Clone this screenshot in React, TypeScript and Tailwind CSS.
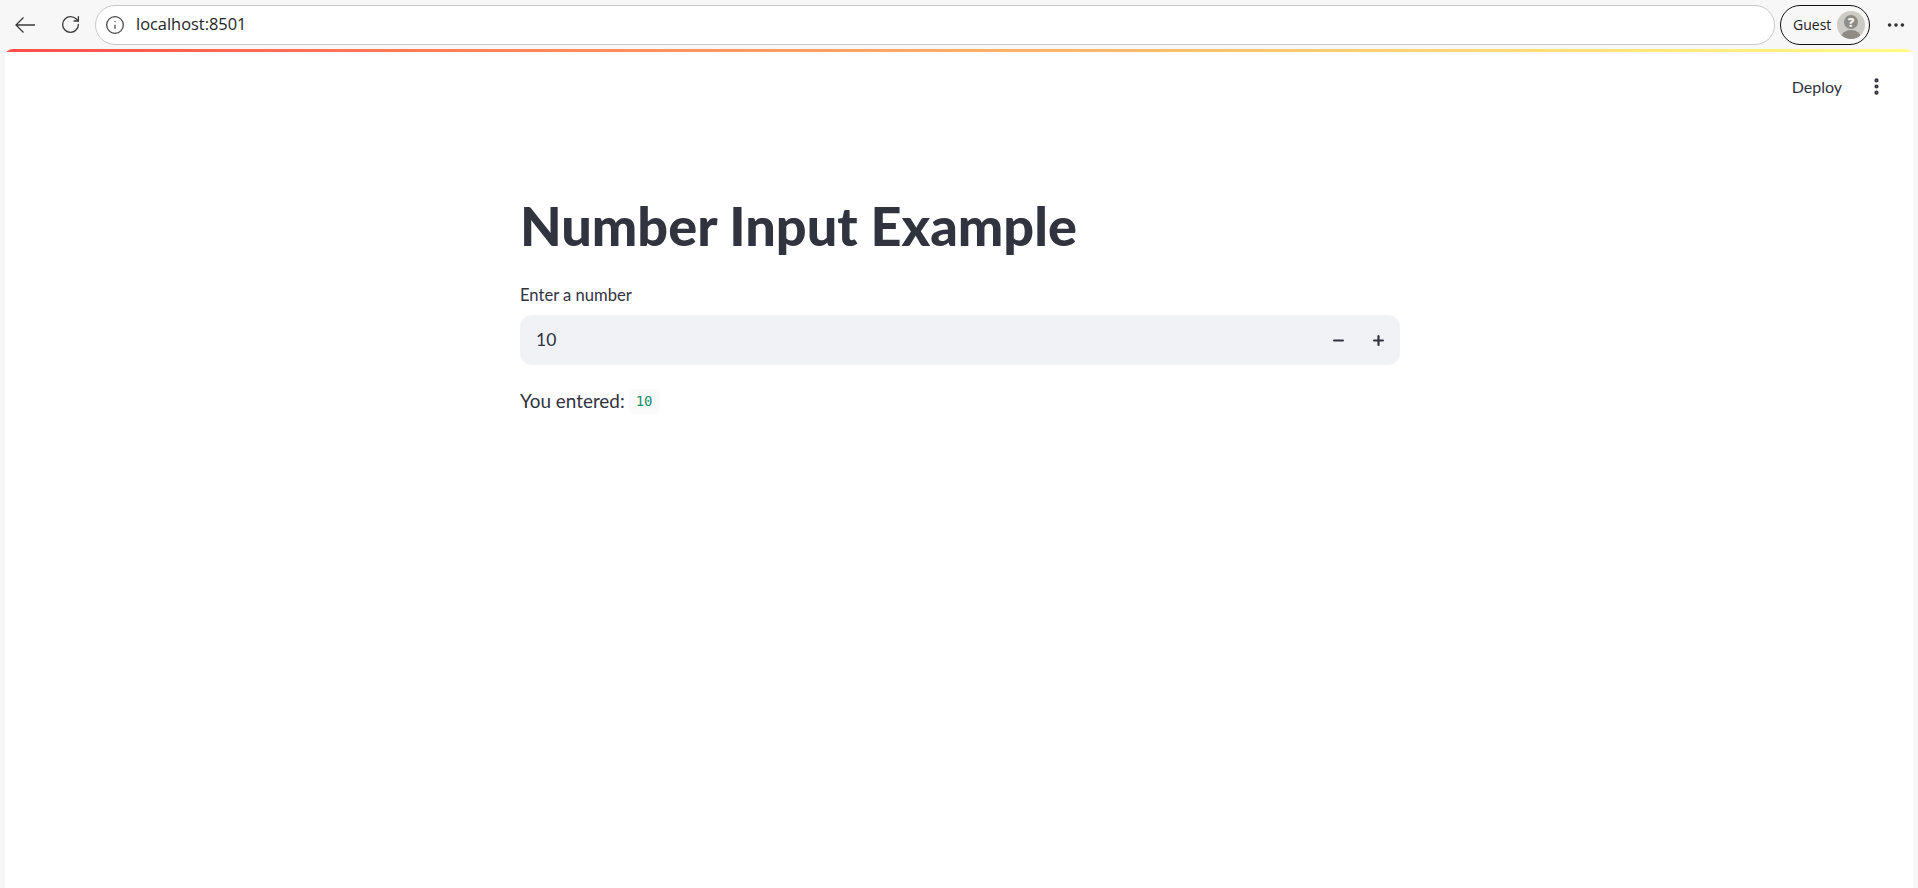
import { RotateCw, Info, Minus, Plus, EllipsisVertical, Ellipsis } from "lucide-react";

function BrowserBar() {
  return (
    <header className="flex h-[49px] flex-shrink-0 items-center bg-[#f7f7f7] font-['Open_Sans',sans-serif]">
      <svg viewBox="0 0 22 18" fill="none" stroke="#3b3b3b" strokeWidth="1.3" className="ml-[14px] h-[18px] w-[22px]">
        <path d="M21 9H2M9.5 1.5 2 9l7.5 7.5" />
      </svg>
      <RotateCw className="ml-[24px] h-[21px] w-[21px] text-[#3b3b3b]" strokeWidth={1.5} />
      <div className="ml-[14px] flex h-[40px] w-[1680px] items-center rounded-full border border-[#c9c9c9] bg-white pl-[9px]">
        <Info className="h-[20px] w-[20px] text-[#444]" strokeWidth={1.5} />
        <span className="ml-[11px] text-[16.4px] text-[#1f1f1f]">localhost:8501</span>
      </div>
      <div className="ml-[5px] flex h-[40px] w-[90px] items-center rounded-full border border-[#111] pl-[12px] text-[14px] text-[#222]">
        Guest
        <svg viewBox="0 0 28 28" className="ml-[6px] h-[28px] w-[28px]">
          <defs>
            <clipPath id="avatar">
              <circle cx="14" cy="14" r="14" />
            </clipPath>
          </defs>
          <circle cx="14" cy="14" r="14" fill="#cdcbc6" />
          <ellipse cx="14" cy="27" rx="10" ry="8" fill="#8f8c86" clipPath="url(#avatar)" />
          <circle cx="14" cy="11" r="7" fill="#8f8c86" />
          <text x="14" y="15.5" fontSize="13" fontWeight="800" fill="#f4f4f2" textAnchor="middle">?</text>
        </svg>
      </div>
      <Ellipsis className="ml-[15px] h-[22px] w-[22px] text-[#333]" strokeWidth={2} />
    </header>
  );
}

export default function App() {
  return (
    <div className="flex h-[888px] w-[1918px] flex-col overflow-hidden bg-[#f7f7f7]">
      <BrowserBar />
      <div className="mx-[5px] flex flex-1 flex-col overflow-hidden rounded-t-[8px] bg-white font-['Lato',sans-serif] text-[#31333f]">
        <div className="h-[3px] flex-shrink-0 bg-gradient-to-r from-[#ff4b4b] to-[#fffd80]" />
        <div className="flex h-[66px] flex-shrink-0 items-center justify-end pt-[3px]">
          <span className="text-[16px]">Deploy</span>
          <EllipsisVertical className="ml-[24px] mr-[26px] h-[21px] w-[21px]" strokeWidth={2.8} />
        </div>
        <main className="ml-[515px] flex w-[880px] flex-col">
          <h1 className="mt-[78px] text-[54px] leading-[60px] font-black">Number Input Example</h1>
          <label className="mt-[29px] text-[16.6px] leading-[20px]">Enter a number</label>
          <div className="mt-[10px] flex h-[50px] items-center rounded-[12px] bg-[#f0f2f6] pl-[16px] pr-[14px] text-[17.5px]">
            <span>10</span>
            <Minus className="ml-auto h-[15px] w-[15px]" strokeWidth={3.5} />
            <Plus className="ml-[25px] h-[15px] w-[15px]" strokeWidth={3.5} />
          </div>
          <p className="mt-[23px] flex items-center text-[18.9px] leading-[26px]">
            You entered:
            <code className="ml-[4px] rounded-[6px] bg-[#fafafa] px-[7px] py-[3px] font-['DejaVu_Sans_Mono',monospace] text-[14px] leading-[19px] text-[#1d8f6a]">
              10
            </code>
          </p>
        </main>
      </div>
    </div>
  );
}
